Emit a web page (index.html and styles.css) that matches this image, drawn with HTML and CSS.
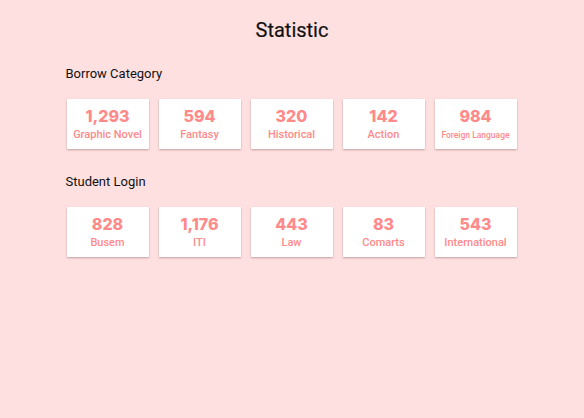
FILE: index.html
```html
<!DOCTYPE html>
<html>
<head>
<meta charset="utf-8">
<link rel="stylesheet" href="styles.css">
</head>
<body>
<main class="page">
  <h1 class="title">Statistic</h1>
  <section class="section">
    <h2 class="section-title">Borrow Category</h2>
    <div class="cards">
      <div class="card"><div class="num">1,293</div><div class="label">Graphic Novel</div></div>
      <div class="card"><div class="num">594</div><div class="label">Fantasy</div></div>
      <div class="card"><div class="num">320</div><div class="label">Historical</div></div>
      <div class="card"><div class="num">142</div><div class="label">Action</div></div>
      <div class="card"><div class="num">984</div><div class="label small">Foreign Language</div></div>
    </div>
  </section>
  <section class="section">
    <h2 class="section-title">Student Login</h2>
    <div class="cards">
      <div class="card"><div class="num">828</div><div class="label">Busem</div></div>
      <div class="card"><div class="num">1,176</div><div class="label">ITI</div></div>
      <div class="card"><div class="num">443</div><div class="label">Law</div></div>
      <div class="card"><div class="num">83</div><div class="label">Comarts</div></div>
      <div class="card"><div class="num">543</div><div class="label">International</div></div>
    </div>
  </section>
</main>
</body>
</html>
```
FILE: styles.css
```css
html, body {
  margin: 0;
  padding: 0;
  background: #ffe0e0;
  height: 100%;
}
body {
  font-family: Roboto, "Noto Sans", sans-serif;
  color: #111;
}
.page {
  width: 451px;
  margin: 0 auto;
  padding-top: 17px;
}
.title {
  margin: 0;
  text-align: center;
  font-size: 20px;
  font-weight: 400;
  line-height: 26px;
  -webkit-text-stroke: 0.2px #111;
}
.section {
  margin-top: 22px;
}
.section + .section {
  margin-top: 24px;
}
.section-title {
  margin: 0 0 0 -1px;
  font-size: 13px;
  font-weight: 400;
  line-height: 18px;
}
.cards {
  display: flex;
  gap: 10px;
  margin-top: 16px;
}
.card {
  width: 82px;
  height: 50px;
  background: #fff;
  box-shadow: 0 1px 2px rgba(120, 80, 80, 0.45);
  display: flex;
  flex-direction: column;
  align-items: center;
  justify-content: flex-start;
  color: #ff8a8a;
  box-sizing: border-box;
  padding-top: 8px;
}
.num {
  font-family: Inter, sans-serif;
  font-weight: 800;
  font-size: 16px;
  line-height: 18px;
}
.label {
  font-family: Roboto, sans-serif;
  font-weight: 500;
  font-size: 11px;
  line-height: 15px;
  margin-top: 2px;
}
.label.small {
  font-size: 8.5px;
  margin-top: 3px;
}
```
